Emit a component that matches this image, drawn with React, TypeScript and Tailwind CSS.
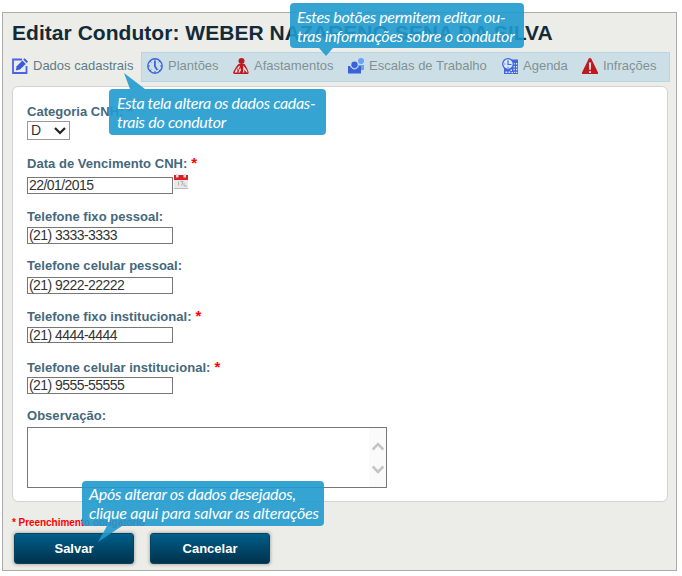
import React from "react";

const SANS = "font-['Liberation_Sans',Arial,sans-serif]";

function EditIcon() {
  return (
    <svg width="16" height="16" viewBox="0 0 16 16" className="shrink-0">
      <path d="M10 1.500H1v13.500h13.500V8" fill="none" stroke="#4a63e6" strokeWidth="1.800" />
      <path d="M3.800 12.500l.9-4.200L10.400 2.500l3.400 3.400-5.800 5.700z" fill="#3a5bdc" />
      <path d="M11.200 1.600L12.600.2 16 3.600 14.600 5z" fill="#3a5bdc" />
    </svg>
  );
}

function ClockIcon() {
  return (
    <svg width="16" height="16" viewBox="0 0 16 16" className="shrink-0">
      <circle cx="8" cy="8" r="7.2" fill="none" stroke="#3f63dd" strokeWidth="1.4" />
      <path d="M8 1v2M8 13v2M1 8h2M13 8h2M3 3l1.4 1.4M13 3l-1.400 1.400M3 13l1.400-1.400M13 13l-1.400-1.400" stroke="#3f63dd" strokeWidth="1" />
      <path d="M7 3h1.800v5l2.200 3.400-1.400 1L7 8.500z" fill="#3f63dd" />
    </svg>
  );
}

function AwayIcon() {
  return (
    <svg width="16" height="16" viewBox="0 0 16 16" className="shrink-0">
      <circle cx="8.500" cy="3" r="3" fill="#bd1a20" />
      <path d="M5.500 6h6c1.500 2 3.500 6 4.200 8.800L15 16H1l-1-1.200C.8 12 4 7.500 5.500 6z" fill="#bd1a20" />
      <path d="M6.500 7.500L8 12l-1.300 2.500H1.700C2.500 12 4.500 9 6.500 7.500zM10 7.500c.5 2 .3 4.500-.2 7h1.500l-.2-3 2.700 3h.8C14 12 12 9 10 7.500z" fill="#f3e5e9" />
      <path d="M4.800 10.500v4M7 9l-2.500 6" stroke="#bd1a20" strokeWidth=".9" />
    </svg>
  );
}

function PeopleIcon() {
  return (
    <svg width="16" height="16" viewBox="0 0 16 16" className="shrink-0">
      <circle cx="13" cy="3" r="3" fill="#6aa2f8" />
      <path d="M10 7h6v5h-6z" fill="#6aa2f8" />
      <circle cx="6.500" cy="6.700" r="3.200" fill="#3a62d8" />
      <path d="M0 8h2.500c1.500 3.700 6.500 3.700 8 0H13v7.500H0z" fill="#3a62d8" />
      <path d="M2.600 8c1 4 6.800 4 7.800 0" stroke="#cfdfe7" strokeWidth=".8" fill="none" />
    </svg>
  );
}

function AgendaIcon() {
  return (
    <svg width="16" height="16" viewBox="0 0 16 16" className="shrink-0">
      <path d="M9 1.500h7V16H2v-6h7z" fill="#3f66da" />
      <path d="M11.500 5h1.300v1.500h-1.300zM14 5h1.300v1.500H14zM11.500 8h1.300v1.500h-1.300zM14 8h1.300v1.500H14zM11.500 10.800h1.300v1.500h-1.300zM14 10.800h1.300v1.500H14zM8.500 11.500H10V13H8.500zM3.500 13.500h1.800V15H3.500zM6.500 13.500h1.800V15H6.500zM9.500 14H11v1.200H9.500zM12 13.700h1.200V15H12zM14 13.700h1.300V15H14z" fill="#dbe8f5" />
      <circle cx="6" cy="6" r="5.300" fill="#dce8f6" stroke="#3f66da" strokeWidth="1.300" />
      <path d="M6 2.300v4.200h3.500M2.300 6h1M6 8.800v1" fill="none" stroke="#3f66da" strokeWidth="1.200" />
    </svg>
  );
}

function WarningIcon() {
  return (
    <svg width="16" height="16" viewBox="0 0 16 16" className="shrink-0">
      <path d="M8 0c1 0 1.400.8 1.800 1.700L16 14.500V16H0v-1.500L6.200 1.700C6.600.8 7 0 8 0z" fill="#bd1a20" />
      <path d="M6.900 4.500h2.200l-.3 7.300H7.200zM7 13.300h2V15H7z" fill="#f1dfe3" />
    </svg>
  );
}

function CalendarIcon() {
  return (
    <svg width="14" height="15" viewBox="0 0 14 15" className="shrink-0">
      <path d="M0 4h14v11H0z" fill="#e9e9e9" />
      <path d="M0 1h14v5H0z" fill="#dc1f22" />
      <path d="M2 0h2.500v3.500H2zM9.500 0H12v3.500H9.500z" fill="#e6d5d5" />
      <path d="M0 14.500h14" stroke="#bcbcbc" />
      <path d="M4.500 7.500v4M6.500 7.500h2.500l-1.500 4M10 9v3h3" stroke="#aaa" strokeWidth=".9" fill="none" />
    </svg>
  );
}

const tabs = [
  { label: "Plantões", Icon: ClockIcon, width: "w-[86px]" },
  { label: "Afastamentos", Icon: AwayIcon, width: "w-[115px]" },
  { label: "Escalas de Trabalho", Icon: PeopleIcon, width: "w-[154px]" },
  { label: "Agenda", Icon: AgendaIcon, width: "w-[80px]" },
  { label: "Infrações", Icon: WarningIcon, width: "w-[80px]" },
];

function Label({ text, required }: { text: string; required?: boolean }) {
  return (
    <label className="block h-4 text-[13px] leading-4 font-bold tracking-[0.03px] whitespace-nowrap text-[#45687d]">
      {text}
      {required && <span className="ml-1 text-[15px] text-[#f00]">*</span>}
    </label>
  );
}

function Field({
  label,
  value,
  required,
  className,
  box,
  children,
}: {
  label: string;
  value: string;
  required?: boolean;
  className: string;
  box: string;
  children?: React.ReactNode;
}) {
  return (
    <div className={className}>
      <Label text={label} required={required} />
      <div className="flex items-start">
        <div className={`${box} w-[146px] border border-[#777] bg-white pl-[1px] text-[14px] leading-[15px] tracking-[-0.55px] text-[#333]`}>
          {value}
        </div>
        {children}
      </div>
    </div>
  );
}

const calloutBase =
  "absolute rounded-[4px] bg-[#209ace]/90 font-['Lato',sans-serif] text-[16px] leading-[19px] whitespace-nowrap text-white italic";

const buttonBase =
  "h-[31px] w-[120px] rounded-[3px] border border-[#06435f] bg-linear-to-b from-[#005f8a] to-[#00334d] shadow-[0_0_3px_1px_rgba(90,70,70,0.35)]";

export default function App() {
  return (
    <div className={`relative h-[576px] w-[682px] overflow-hidden bg-white pt-3 pl-[2px] ${SANS}`}>
      <main className="h-[559px] w-[675px] border border-[#ababab] bg-[#ecede8] pl-[9px]">
        <h1 className="mt-[7px] h-[26px] text-[21px] leading-[26px] font-bold tracking-[0.04px] whitespace-nowrap text-[#132a38]">
          Editar Condutor: WEBER NAZARENO SENA DA SILVA
        </h1>
        <nav className="mt-[6px] flex h-[30px] text-[13px]">
          <div className="flex w-[129px] items-center gap-[5px] pb-[3px] text-[#5c7c8a]">
            <EditIcon />
            Dados cadastrais
          </div>
          <div className="flex w-[529px] items-center border border-[#b8d6e1] bg-[#cddfe6] pb-[3px] pl-[5px] text-[#829293]">
            {tabs.map(({ label, Icon, width }) => (
              <div key={label} className={`flex shrink-0 items-center gap-[5px] whitespace-nowrap ${width}`}>
                <Icon />
                {label}
              </div>
            ))}
          </div>
        </nav>
        <section className="mt-[4px] h-[416px] w-[656px] rounded-[6px] border border-[#d2d3d2] bg-white pt-[16px] pl-[14px]">
          <div>
            <Label text="Categoria CNH:" required />
            <div className="mt-[2px] flex h-[19px] w-[43px] items-center justify-between border border-[#999] pr-[3px] pl-[3px] text-[14px] text-[#333]">
              D
              <svg width="12" height="8" viewBox="0 0 12 8">
                <path d="M1 1l5 5 5-5" fill="none" stroke="#222" strokeWidth="2.200" />
              </svg>
            </div>
          </div>
          <Field label="Data de Vencimento CNH:" value="22/01/2015" required className="mt-[15px]" box="mt-[6px] h-[17px]">
            <div className="mt-[3px] ml-[1px]">
              <CalendarIcon />
            </div>
          </Field>
          <Field label="Telefone fixo pessoal:" value="(21) 3333-3333" className="mt-[15px]" box="mt-[2px] h-[17px]" />
          <Field label="Telefone celular pessoal:" value="(21) 9222-22222" className="mt-[14px]" box="mt-[3px] h-[17px]" />
          <Field label="Telefone fixo institucional:" value="(21) 4444-4444" required className="mt-[14px]" box="mt-[3px] h-[16px]" />
          <Field label="Telefone celular institucional:" value="(21) 9555-55555" required className="mt-[16px]" box="mt-[2px] h-[17px]" />
          <div className="mt-[14px]">
            <Label text="Observação:" />
            <div className="mt-[3px] flex h-[61px] w-[360px] justify-end border border-[#777] bg-white">
              <div className="flex w-[17px] flex-col items-center justify-center gap-[14px] bg-[#fafafa]">
                <svg width="12" height="9" viewBox="0 0 12 9">
                  <path d="M.7 7.500L6 2.200l5.300 5.300" fill="none" stroke="#c5c5c5" strokeWidth="2.600" />
                </svg>
                <svg width="12" height="9" viewBox="0 0 12 9">
                  <path d="M.7 1.500L6 6.800l5.300-5.300" fill="none" stroke="#c5c5c5" strokeWidth="2.600" />
                </svg>
              </div>
            </div>
          </div>
        </section>
        <p className="mt-[15px] h-[12px] text-[10px] leading-[12px] font-bold tracking-[-0.05px] whitespace-nowrap text-[#f00]">
          * Preenchimento obrigatório
        </p>
        <div className="mt-[4px] ml-[2px] flex gap-4 text-[13px] font-bold text-white">
          <button className={buttonBase}>Salvar</button>
          <button className={buttonBase}>Cancelar</button>
        </div>
      </main>

      <div className={`${calloutBase} top-[3px] left-[290px] h-[45px] w-[234px] pt-[4px] pl-[7px]`}>
        <div className="tracking-[-0.32px]">Estes botões permitem editar ou-</div>
        <div className="tracking-[-0.25px]">tras informações sobre o condutor</div>
        <svg className="absolute top-[45px] left-[29px]" width="14" height="8" viewBox="0 0 14 8">
          <path d="M0 0h14L7 8z" fill="#209ace" fillOpacity=".9" />
        </svg>
      </div>

      <div className={`${calloutBase} top-[89px] left-[109px] h-[46px] w-[217px] pt-[4px] pl-[8px]`}>
        <div className="tracking-[-0.33px]">Esta tela altera os dados cadas-</div>
        <div className="tracking-[-0.25px]">trais do condutor</div>
        <svg className="absolute top-[-16px] left-[15px]" width="22" height="16" viewBox="0 0 22 16">
          <path d="M0 0l21 16H6z" fill="#209ace" fillOpacity=".9" />
        </svg>
      </div>

      <div className={`${calloutBase} top-[481px] left-[82px] h-[45px] w-[242px] pt-[3px] pl-[7px]`}>
        <div className="tracking-[-0.25px]">Após alterar os dados desejados,</div>
        <div className="tracking-[-0.2px]">clique aqui para salvar as alterações</div>
        <svg className="absolute top-[45px] left-[16px]" width="25" height="17" viewBox="0 0 25 17">
          <path d="M9 0h15L0 16z" fill="#209ace" fillOpacity=".9" />
        </svg>
      </div>
    </div>
  );
}
